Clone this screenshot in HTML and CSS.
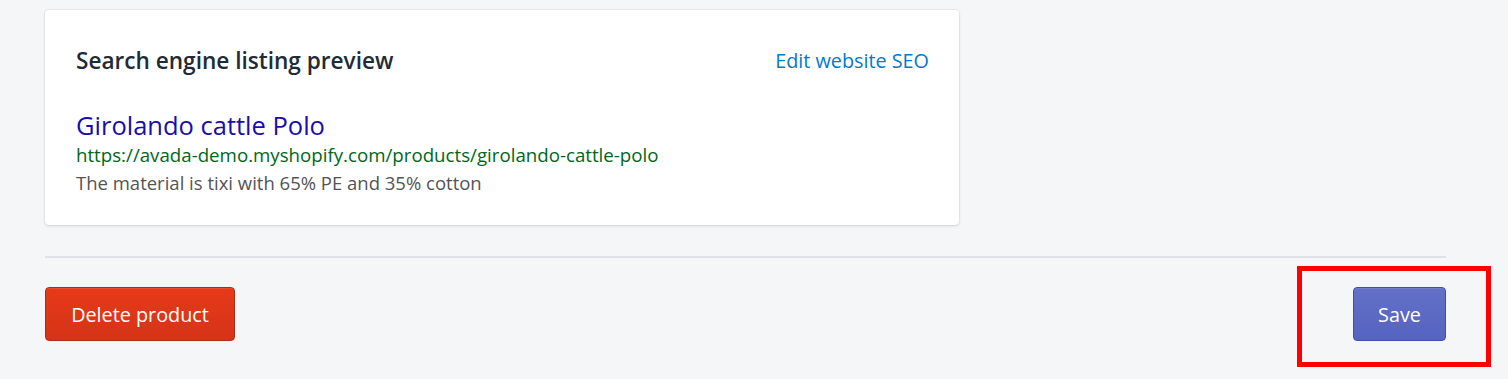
FILE: index.html
```html
<!DOCTYPE html>
<html lang="en">
<head>
<meta charset="utf-8">
<title>Search engine listing preview</title>
<link rel="stylesheet" href="styles.css">
</head>
<body>
<div class="page">
  <section class="card">
    <div class="card-header">
      <h2 class="card-title">Search engine listing preview</h2>
      <a class="card-action" href="#">Edit website SEO</a>
    </div>
    <div class="seo-preview">
      <div class="seo-title">Girolando cattle Polo</div>
      <div class="seo-url">https://avada-demo.myshopify.com/products/girolando-cattle-polo</div>
      <div class="seo-desc">The material is tixi with 65% PE and 35% cotton</div>
    </div>
  </section>
  <div class="divider"></div>
  <div class="actions">
    <button class="btn btn-destructive" type="button">Delete product</button>
    <div class="save-wrap">
      <button class="btn btn-primary" type="button">Save</button>
      <div class="highlight"></div>
    </div>
  </div>
</div>
</body>
</html>
```

FILE: styles.css
```css
html, body {
  margin: 0;
  padding: 0;
  background: #f4f6f8;
  font-family: "Open Sans", "Noto Sans", sans-serif;
  color: #212b36;
}

.page {
  padding: 10px 62px 38px 45px;
  width: 1401px;
}

.card {
  width: 914px;
  box-sizing: border-box;
  height: 215px;
  background: #ffffff;
  border-radius: 4px;
  box-shadow: 0 0 0 1px rgba(63, 63, 68, 0.05), 0 1px 3px 0 rgba(63, 63, 68, 0.15);
  padding: 36px 30px 0 31px;
}

.card-header {
  display: flex;
  justify-content: space-between;
  align-items: center;
  height: 30px;
}

.card-title {
  margin: 0;
  font-size: 22.6px;
  font-weight: 600;
  line-height: 30px;
  color: #212b36;
}

.card-action {
  font-size: 19.8px;
  line-height: 30px;
  color: #007ace;
  text-decoration: none;
}

.seo-preview {
  margin-top: 33px;
}

.seo-title {
  font-size: 25.5px;
  line-height: 32px;
  color: #1a0dab;
}

.seo-url {
  font-size: 18.7px;
  line-height: 28px;
  color: #006621;
}

.seo-desc {
  font-size: 18.5px;
  line-height: 28px;
  color: #545454;
}

.divider {
  margin-top: 31px;
  height: 2px;
  background: #dfe3e8;
}

.actions {
  display: flex;
  justify-content: space-between;
  margin-top: 29px;
}

.btn {
  font-family: inherit;
  font-size: 19.8px;
  height: 54px;
  border-radius: 4px;
  color: #ffffff;
  cursor: pointer;
}

.btn-destructive {
  width: 190px;
  background: linear-gradient(to bottom, #e6391a, #d53417);
  border: 1px solid #b02b13;
  box-shadow: 0 1px 0 rgba(255, 255, 255, 0.1) inset;
}

.btn-primary {
  width: 93px;
  background: linear-gradient(to bottom, #6371c7, #5563c1);
  border: 1px solid #3f4eae;
  box-shadow: 0 1px 0 rgba(255, 255, 255, 0.1) inset;
}

.save-wrap {
  position: relative;
}

.highlight {
  position: absolute;
  left: -56px;
  top: -21px;
  width: 194px;
  height: 101px;
  box-sizing: border-box;
  border: 5px solid #ff0000;
}
```
